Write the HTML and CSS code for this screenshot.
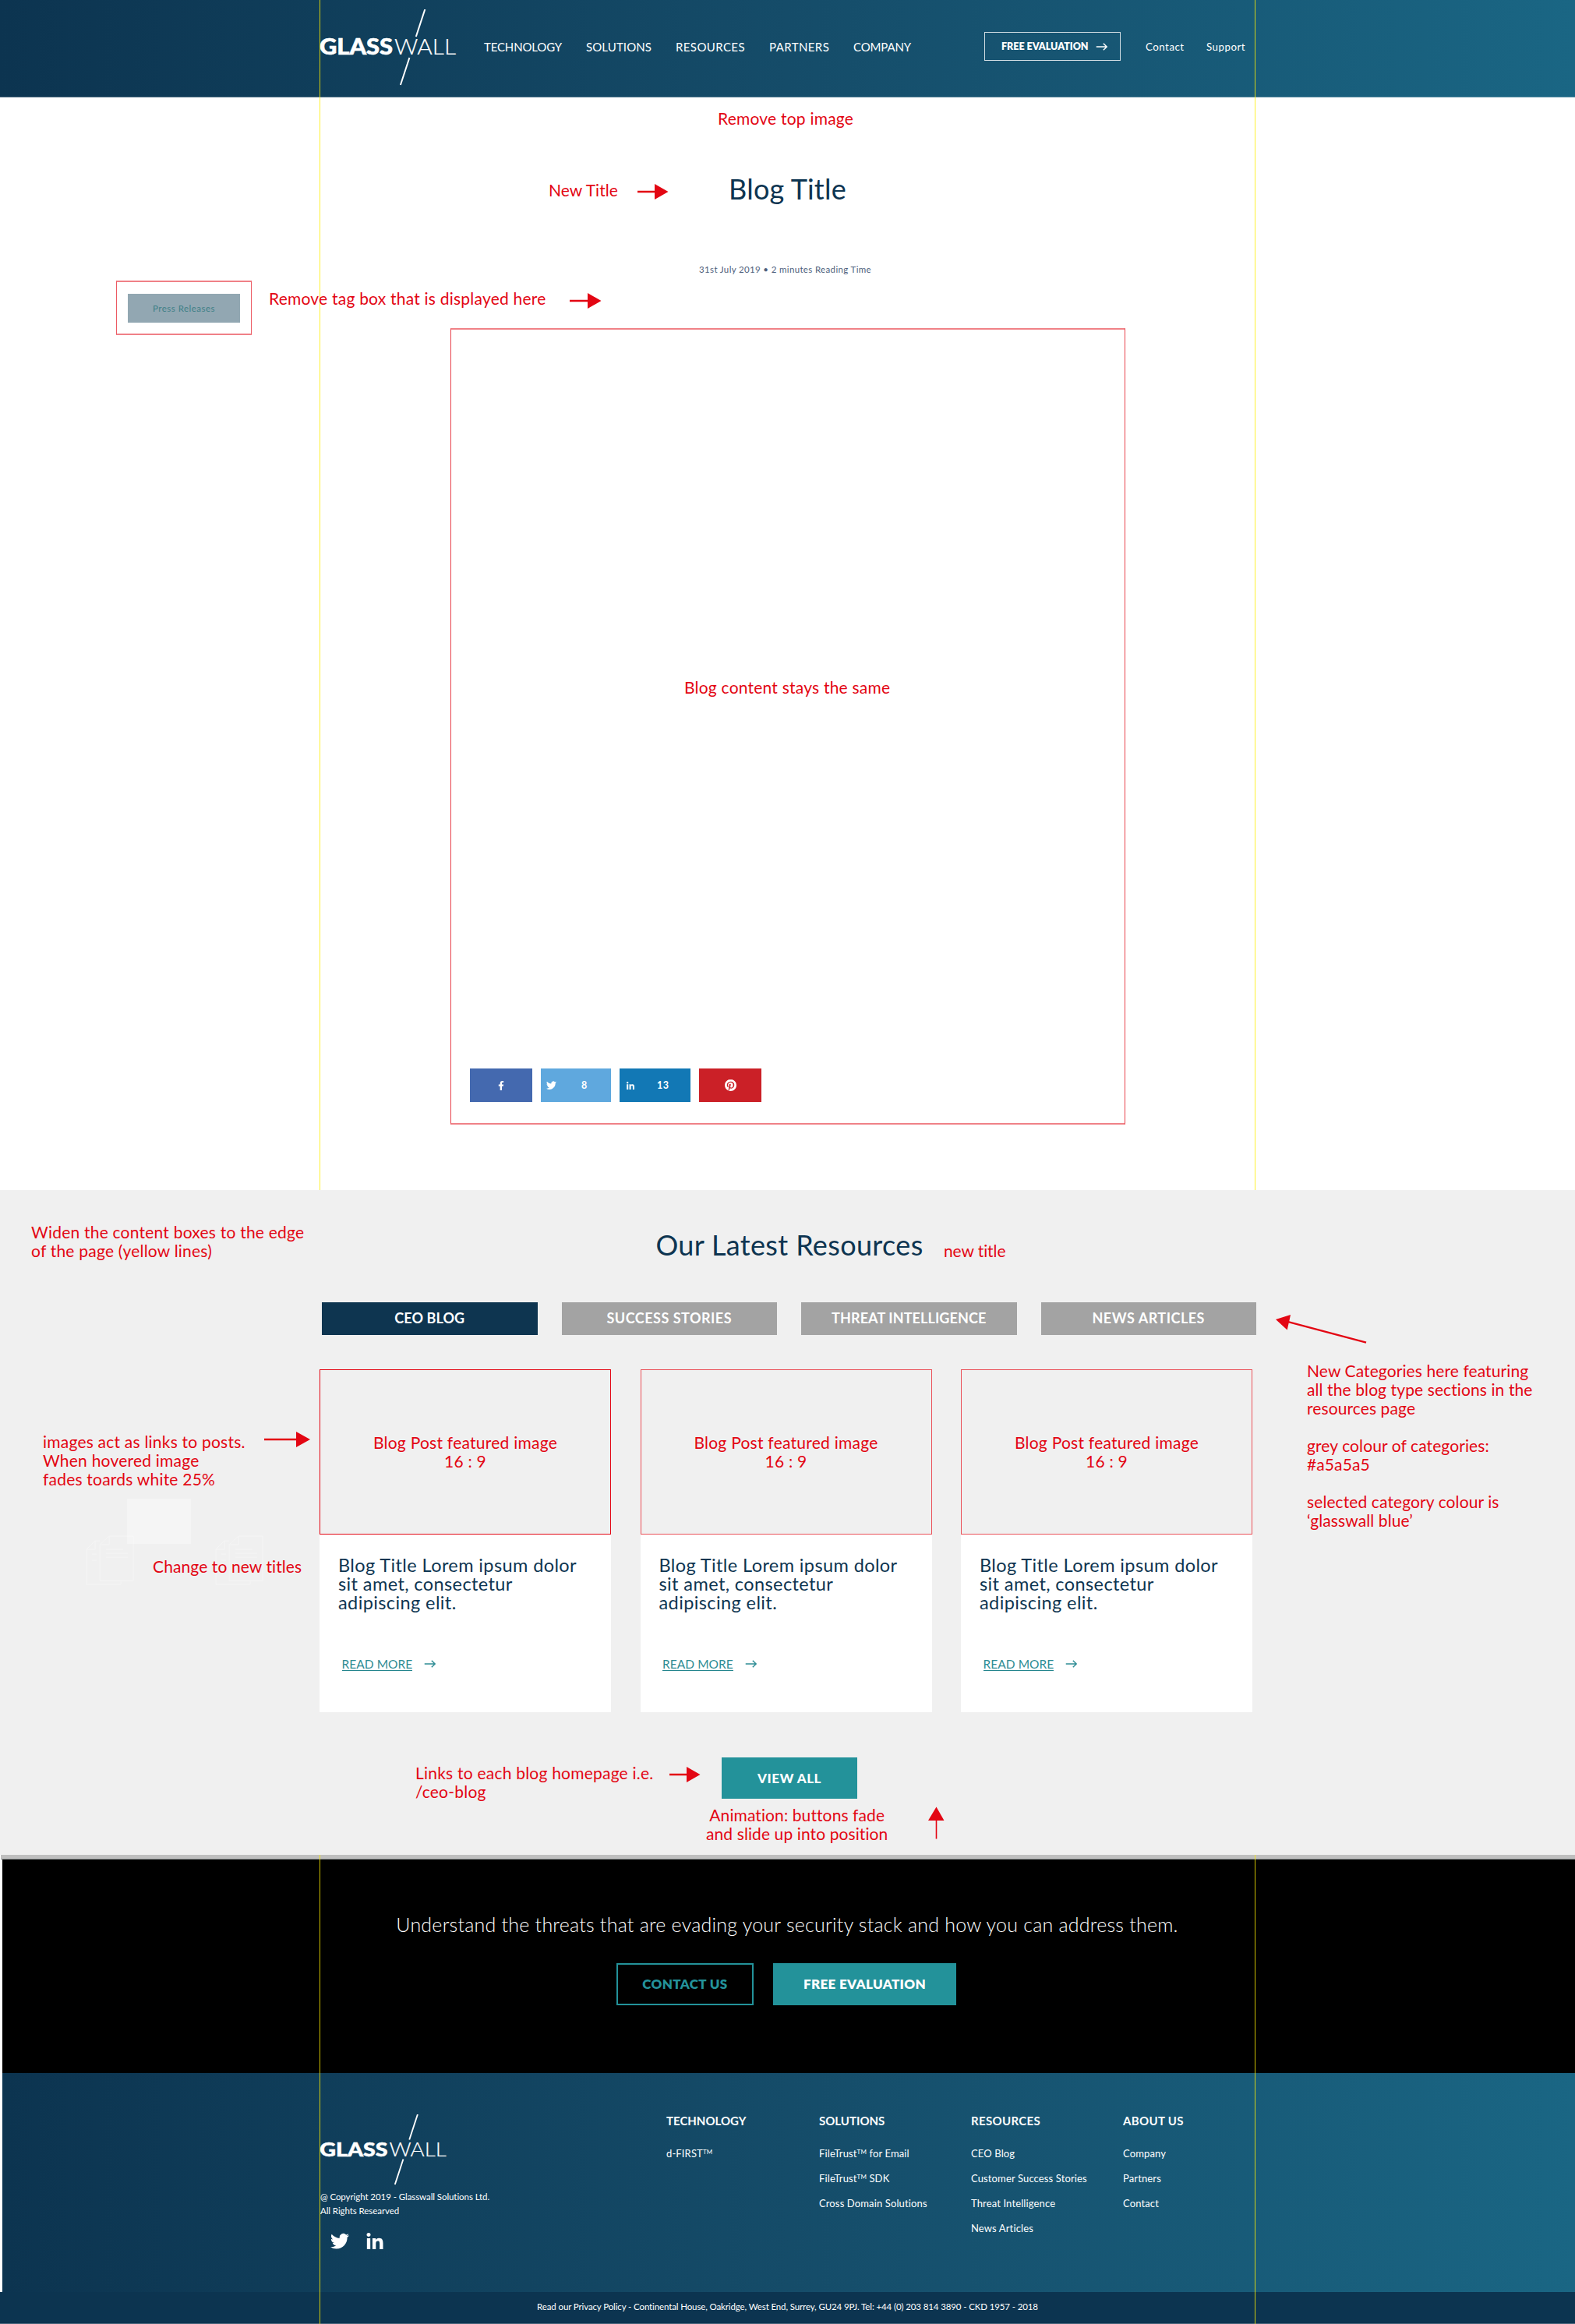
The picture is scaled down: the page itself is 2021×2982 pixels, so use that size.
FILE: index.html
```html
<!DOCTYPE html>
<html lang="en">
<head>
<meta charset="utf-8">
<title>Glasswall – Blog</title>
<link rel="stylesheet" href="styles.css">
</head>
<body>
<svg class="defs" aria-hidden="true">
  <symbol id="twitter" viewBox="0 2 24 19.6"><path d="M23.953 4.57a10 10 0 01-2.825.775 4.958 4.958 0 002.163-2.723c-.951.555-2.005.959-3.127 1.184a4.92 4.92 0 00-8.384 4.482C7.69 8.095 4.067 6.13 1.64 3.162a4.822 4.822 0 00-.666 2.475c0 1.71.87 3.213 2.188 4.096a4.904 4.904 0 01-2.228-.616v.06a4.923 4.923 0 003.946 4.827 4.996 4.996 0 01-2.212.085 4.936 4.936 0 004.604 3.417 9.867 9.867 0 01-6.102 2.105c-.39 0-.779-.023-1.17-.067a13.995 13.995 0 007.557 2.209c9.053 0 13.998-7.496 13.998-13.985 0-.21 0-.42-.015-.63A9.935 9.935 0 0024 4.59z"/></symbol>
  <symbol id="linkedin" viewBox="0 0 448 448"><path d="M100.28 448H7.4V148.9h92.88zM53.79 108.1C24.09 108.1 0 83.5 0 53.8a53.79 53.79 0 0 1 107.58 0c0 29.7-24.1 54.3-53.79 54.3zM447.9 448h-92.68V302.4c0-34.7-.7-79.2-48.29-79.2-48.29 0-55.69 37.7-55.69 76.7V448h-92.78V148.9h89.08v40.8h1.3c12.4-23.5 42.69-48.3 87.88-48.3 94 0 111.28 61.9 111.28 142.3V448z"/></symbol>
  <symbol id="facebook" viewBox="0 0 320 512"><path d="M279.14 288l14.22-92.66h-88.91v-60.13c0-25.35 12.42-50.06 52.24-50.06h40.42V6.26S260.43 0 225.36 0c-73.22 0-121.08 44.38-121.08 124.72v70.62H22.89V288h81.39v224h100.17V288z"/></symbol>
  <symbol id="pinterest" viewBox="0 0 24 24"><path d="M12.017 0C5.396 0 .029 5.367.029 11.987c0 5.079 3.158 9.417 7.618 11.162-.105-.949-.199-2.403.041-3.439.219-.937 1.406-5.957 1.406-5.957s-.359-.72-.359-1.781c0-1.663.967-2.911 2.168-2.911 1.024 0 1.518.769 1.518 1.688 0 1.029-.653 2.567-.992 3.992-.285 1.193.6 2.165 1.775 2.165 2.128 0 3.768-2.245 3.768-5.487 0-2.861-2.063-4.869-5.008-4.869-3.41 0-5.409 2.562-5.409 5.199 0 1.033.394 2.143.889 2.741.099.12.112.225.085.345-.09.375-.293 1.199-.334 1.363-.053.225-.172.271-.401.165-1.495-.69-2.433-2.878-2.433-4.646 0-3.776 2.748-7.252 7.92-7.252 4.158 0 7.392 2.967 7.392 6.923 0 4.135-2.607 7.462-6.233 7.462-1.214 0-2.354-.629-2.758-1.379l-.749 2.848c-.269 1.045-1.004 2.352-1.498 3.146 1.123.345 2.306.535 3.55.535 6.607 0 11.985-5.365 11.985-11.987C23.97 5.39 18.592.026 11.985.026L12.017 0z"/></symbol>
  <symbol id="arrow" viewBox="0 0 16 11"><path d="M0 5.5H14.5M10 .8 14.8 5.5 10 10.2" fill="none" stroke="currentColor" stroke-width="1.6"/></symbol>
  <symbol id="docs" viewBox="0 0 62 64"><path d="M18 7H12L1 18V63H45V58M12 7V18H1M18 12 30 1H61V58H18ZM30 1V12H18M26 18H48M26 23H54M26 28H54M8 24H14M8 32H14" fill="none" stroke="currentColor"/></symbol>
</svg>

<div class="page">
  <header class="header">
    <svg class="logo" viewBox="0 0 176 98">
      <text class="logo-bold" x="0" y="58" textLength="94" lengthAdjust="spacingAndGlyphs">GLASS</text>
      <text class="logo-light" x="96" y="58" textLength="79" lengthAdjust="spacingAndGlyphs">WALL</text>
      <path d="M135.3 0 123.8 35M115.4 62 103.9 97" stroke="#fff" stroke-width="2"/>
    </svg>
    <nav class="nav"><a class="tight">TECHNOLOGY</a><a>SOLUTIONS</a><a class="wide">RESOURCES</a><a class="wide">PARTNERS</a><a class="tight">COMPANY</a></nav>
    <a class="header-cta">FREE EVALUATION <svg><use href="#arrow"/></svg></a>
    <a class="header-link">Contact</a>
    <a class="header-link">Support</a>
  </header>

  <main class="post">
    <h1>Blog Title</h1>
    <p class="meta">31st July 2019 • 2 minutes Reading Time</p>
    <article class="content">
      <div class="share">
        <a class="facebook"><svg><use href="#facebook"/></svg></a>
        <a class="twitter"><svg><use href="#twitter"/></svg><b>8</b></a>
        <a class="linkedin"><svg><use href="#linkedin"/></svg><b>13</b></a>
        <a class="pinterest"><svg><use href="#pinterest"/></svg></a>
      </div>
    </article>
  </main>

  <section class="resources">
    <h2>Our Latest Resources</h2>
    <div class="tabs"><a class="active">CEO BLOG</a><a>SUCCESS STORIES</a><a class="less">THREAT INTELLIGENCE</a><a>NEWS ARTICLES</a></div>
    <div class="cards">
      <article class="card">
        <div class="thumb">Blog Post featured image<br>16 : 9</div>
        <h3>Blog Title Lorem ipsum dolor<br>sit amet, consectetur<br>adipiscing elit.</h3>
        <p class="more"><a>READ MORE</a><svg><use href="#arrow"/></svg></p>
      </article>
      <article class="card">
        <div class="thumb">Blog Post featured image<br>16 : 9</div>
        <h3>Blog Title Lorem ipsum dolor<br>sit amet, consectetur<br>adipiscing elit.</h3>
        <p class="more"><a>READ MORE</a><svg><use href="#arrow"/></svg></p>
      </article>
      <article class="card">
        <div class="thumb">Blog Post featured image<br>16 : 9</div>
        <h3>Blog Title Lorem ipsum dolor<br>sit amet, consectetur<br>adipiscing elit.</h3>
        <p class="more"><a>READ MORE</a><svg><use href="#arrow"/></svg></p>
      </article>
    </div>
    <a class="view-all">VIEW ALL</a>
  </section>

  <div class="divider"></div>
  <section class="cta">
    <p>Understand the threats that are evading your security stack and how you can address them.</p>
    <div class="cta-buttons"><a class="outline">CONTACT US</a><a class="solid">FREE EVALUATION</a></div>
  </section>

  <footer class="footer">
    <div class="brand">
      <svg class="logo-small" viewBox="0 0 176 98">
        <text class="logo-bold" x="0" y="58" textLength="94" lengthAdjust="spacingAndGlyphs">GLASS</text>
        <text class="logo-light" x="96" y="58" textLength="79" lengthAdjust="spacingAndGlyphs">WALL</text>
        <path d="M135.3 0 123.8 35M115.4 62 103.9 97" stroke="#fff" stroke-width="2"/>
      </svg>
      <p>@ Copyright 2019 - Glasswall Solutions Ltd.<br>All Rights Researved</p>
      <div class="social"><svg class="tw"><use href="#twitter"/></svg><svg class="in"><use href="#linkedin"/></svg></div>
    </div>
    <div class="col"><h4>TECHNOLOGY</h4><a>d-FIRST<sup>TM</sup></a></div>
    <div class="col"><h4>SOLUTIONS</h4><a>FileTrust<sup>TM</sup> for Email</a><a>FileTrust<sup>TM</sup> SDK</a><a>Cross Domain Solutions</a></div>
    <div class="col"><h4 class="wide">RESOURCES</h4><a>CEO Blog</a><a>Customer Success Stories</a><a>Threat Intelligence</a><a>News Articles</a></div>
    <div class="col"><h4 class="wide">ABOUT US</h4><a>Company</a><a>Partners</a><a>Contact</a></div>
  </footer>
  <div class="legal">Read our Privacy Policy - Continental House, Oakridge, West End, Surrey, GU24 9PJ. Tel: +44 (0) 203 814 3890 - CKD 1957 - 2018</div>

  <!-- review notes pinned over the page -->
  <div class="notes">
    <i class="guide g-left-top"></i><i class="guide g-right-top"></i>
    <i class="guide g-left-bottom"></i><i class="guide g-right-bottom"></i>
    <p class="note n-top">Remove top image</p>
    <p class="note n-title">New Title</p>
    <div class="tag-box"><span>Press Releases</span></div>
    <p class="note n-tag">Remove tag box that is displayed here</p>
    <p class="note n-content">Blog content stays the same</p>
    <p class="note n-widen">Widen the content boxes to the edge<br>of the page (yellow lines)</p>
    <p class="note n-new">new title</p>
    <p class="note n-images">images act as links to posts.<br>When hovered image<br>fades toards white 25%</p>
    <svg class="docs d1"><use href="#docs"/></svg><svg class="docs d2"><use href="#docs"/></svg>
    <i class="swatch"></i>
    <p class="note n-change">Change to new titles</p>
    <p class="note n-cats">New Categories here featuring<br>all the blog type sections in the<br>resources page<br><br>grey colour of categories:<br>#a5a5a5<br><br>selected category colour is<br>‘glasswall blue’</p>
    <p class="note n-links">Links to each blog homepage i.e.<br>/ceo-blog</p>
    <p class="note n-anim">Animation: buttons fade<br>and slide up into position</p>
    <svg class="arrows" viewBox="0 0 2021 2982" fill="#e30613" stroke="none">
      <path d="M818 244.800h22V236l17.500 10L840 256v-8.800h-22z"/>
      <path d="M731 384.800h23V376l17.500 10L754 396v-8.800h-23z"/>
      <path d="M339 1845.800h41V1837l18 10-18 10v-8.800h-41z"/>
      <path d="M859 2275.800h22V2267l17.500 10-17.500 10v-8.800h-22z"/>
      <path d="M1200.700 2359.500V2336H1191l10.500-17.500L1211.500 2336h-9.200v23.500z"/>
      <path d="M1637 1693 1656 1687 1654.300 1695.300 1753.300 1721.500 1752.700 1723.700 1653.700 1697.400 1651.700 1706.500z"/>
    </svg>
  </div>
</div>
</body>
</html>
```
FILE: styles.css
```css
* { box-sizing: border-box; }
body { margin: 0; font-family: Lato, "Liberation Sans", sans-serif; background: #fff; color: #fff; }
h1, h2, h3, h4, p { margin: 0; font-weight: 400; }
svg { display: block; fill: currentColor; }
.defs { position: absolute; width: 0; height: 0; }
.page { position: relative; width: 2021px; height: 2982px; overflow: hidden; }

.logo-bold { font: 900 27.5px Lato, sans-serif; fill: #fff; stroke: #fff; stroke-width: .6; }
.logo-light { font: 300 27.5px Lato, sans-serif; fill: #fff; stroke: #fff; stroke-width: .2; }

.header { display: flex; align-items: center; height: 125px; padding: 0 0 5px 410px; background: linear-gradient(90deg, #0c3450, #154c69 50%, #1a6684); border-bottom: 1px solid rgba(255, 255, 255, .25); }
.logo { width: 176px; height: 98px; margin: 3px 35px 0 0; }
.nav { display: grid; grid-template-columns: 131px 115px 120px 108px 74px; width: 642px; font-size: 15px; letter-spacing: .1px; }
.nav .tight { letter-spacing: -.15px; }
.nav .wide { letter-spacing: .4px; }
.header-cta { display: flex; align-items: center; gap: 9px; width: 175px; height: 37px; padding-left: 21px; margin-right: 32px; border: 1px solid #d3dee4; font-size: 12.5px; font-weight: 800; }
.header-cta svg { width: 16px; height: 10px; }
.header-link { width: 78px; font-size: 13.3px; letter-spacing: .5px; }

.post { height: 1402px; padding-top: 95px; text-align: center; color: #0e3551; }
.post h1 { font-size: 36px; line-height: 44px; letter-spacing: .2px; }
.meta { margin: 74px 6px 67px 0; font-size: 11.5px; line-height: 16px; letter-spacing: .35px; color: #4e5f7c; }
.content { display: flex; align-items: flex-end; width: 866px; height: 1022px; margin-left: 578px; padding: 0 0 27px 24px; border: solid #f08287; border-width: 2px 1px; border-left-color: #e8414b; border-right-color: #e8414b; }
.share { display: flex; gap: 11px; color: #fff; }
.share a { display: flex; align-items: center; justify-content: center; width: 80px; height: 43px; font-size: 12.5px; letter-spacing: .5px; }
.share .facebook { background: #4469af; }
.share .twitter { justify-content: flex-start; width: 90px; padding-left: 7px; background: #5fa8de; }
.share .linkedin { justify-content: flex-start; width: 91px; padding-left: 9px; background: #1278b5; }
.share .pinterest { background: #cb2027; }
.facebook svg { width: 8px; height: 12px; }
.twitter svg { width: 13px; height: 11px; margin-right: 32px; }
.linkedin svg { width: 10px; height: 10px; margin-right: 29px; }
.pinterest svg { width: 15px; height: 15px; }

.resources { height: 853px; padding-top: 48px; background: #f0f0f0; color: #0e3551; }
.resources h2 { padding-left: 5px; font-size: 36px; line-height: 44px; letter-spacing: .35px; text-align: center; }
.tabs { display: flex; gap: 31px; margin: 52px 0 0 413px; }
.tabs a { display: flex; align-items: center; justify-content: center; width: 276.5px; height: 42px; padding-bottom: 2px; background: #a3a3a3; color: #fff; font-size: 18px; font-weight: 700; letter-spacing: .5px; }
.tabs .active { background: #0e3550; letter-spacing: .1px; }
.tabs .less { letter-spacing: .1px; }
.cards { display: flex; gap: 37.5px; margin: 44px 0 0 410px; }
.card { width: 374px; height: 440px; background: #fff; }
.thumb { display: flex; align-items: center; justify-content: center; height: 212px; border: 1px solid #ea5058; background: #f0f0f0; color: #e30613; font-size: 21px; line-height: 24px; letter-spacing: .25px; text-align: center; }
.card:first-child .thumb { border-color: #e30613; }
.card h3 { margin: 27px 0 0 24px; font-size: 23.5px; line-height: 24px; letter-spacing: .4px; }
.more { display: flex; align-items: center; gap: 15px; margin: 58px 0 0 28.5px; font-size: 15.5px; line-height: 20px; color: #2f8d95; }
.more a { height: 18px; border-bottom: 1px solid #23858d; line-height: 19px; letter-spacing: .05px; }
.more svg { width: 16px; height: 10px; }
.view-all { display: flex; align-items: center; justify-content: center; width: 174px; height: 53px; margin: 58px 0 0 926px; padding-bottom: 1px; background: #23929a; color: #fff; font-size: 17px; font-weight: 900; letter-spacing: .5px; }

.divider { height: 6px; margin-left: 1px; background: #bfbfbf; border-bottom: 1px solid #8a8f8e; }
.cta { height: 274px; padding: 68px 4px 0 0; border-left: 3px solid #fff; background: #000; text-align: center; }
.cta p { font-size: 25px; font-weight: 300; line-height: 30px; letter-spacing: .23px; }
.cta-buttons { display: flex; justify-content: center; gap: 25px; margin: 35px 2px 0 0; font-size: 17px; font-weight: 800; letter-spacing: .35px; }
.cta-buttons a { display: flex; align-items: center; justify-content: center; height: 54px; padding-bottom: 2px; }
.outline { width: 176px; border: 2px solid #23929a; color: #23929a; }
.solid { width: 235px; background: #23929a; }

.footer { display: grid; grid-template-columns: 445px 196px 195px 195px 1fr; height: 281px; padding: 51px 0 0 407px; border-left: 3px solid #fff; background: linear-gradient(90deg, #0c3450, #154c69 50%, #1a6684); }
.logo-small { width: 164px; height: 91px; margin-top: 2px; }
.brand p { margin: 6px 0 19px 1px; font-size: 11.5px; line-height: 18px; letter-spacing: -.07px; }
.social { display: flex; gap: 22px; padding-left: 14px; }
.tw { width: 24px; height: 21px; }
.in { width: 22px; height: 21px; }
.col h4 { margin-bottom: 16px; font-size: 15px; font-weight: 700; line-height: 20px; letter-spacing: 0; }
.col h4.wide { letter-spacing: .35px; }
.col a { display: block; font-size: 13px; line-height: 32px; letter-spacing: .13px; }
.col sup { font-size: 8px; line-height: 0; vertical-align: 4px; }
.legal { display: flex; align-items: center; justify-content: center; height: 41px; padding-bottom: 4px; background: #0c3450; border-bottom: 1px solid #4a667c; font-size: 11.5px; letter-spacing: -.12px; }

.notes { position: absolute; inset: 0; color: #e30613; }
.note { position: absolute; font-size: 21px; line-height: 24px; letter-spacing: .22px; white-space: nowrap; }
.n-top { left: 921px; top: 140px; }
.n-title { left: 704px; top: 232px; letter-spacing: .05px; }
.n-tag { left: 345px; top: 371px; }
.n-content { left: 878px; top: 870px; }
.n-widen { left: 40px; top: 1569px; }
.n-new { left: 1211px; top: 1593px; letter-spacing: -.1px; }
.n-images { left: 55px; top: 1838px; }
.n-change { left: 196px; top: 1998px; letter-spacing: .1px; }
.n-cats { left: 1677px; top: 1747px; letter-spacing: .1px; }
.n-links { left: 533px; top: 2263px; }
.n-anim { left: 906px; top: 2317px; letter-spacing: .1px; text-align: center; }
.tag-box { position: absolute; left: 149px; top: 360px; width: 174px; height: 70px; padding: 15px 14px; border: solid #f08087; border-width: 2px 1px; border-left-color: #ec5a63; border-right-color: #ec5a63; }
.tag-box span { display: flex; align-items: center; justify-content: center; height: 37px; background: #92a7b2; color: #3f8087; font-size: 11.5px; letter-spacing: .5px; }
.swatch { position: absolute; left: 163px; top: 1923px; width: 82px; height: 58px; background: rgba(255, 255, 255, .35); }
.docs { position: absolute; top: 1970px; width: 62px; height: 64px; color: #f5f5f5; }
.d1 { left: 110px; }
.d2 { left: 276px; }
.arrows { position: absolute; inset: 0; width: 2021px; height: 2982px; }
.guide { position: absolute; width: 1px; background: #ffee00; opacity: .8; }
.g-left-top, .g-right-top { top: 0; height: 1527px; }
.g-left-bottom, .g-right-bottom { top: 2380px; height: 602px; }
.g-left-top, .g-left-bottom { left: 410px; }
.g-right-top, .g-right-bottom { left: 1610px; }
```
